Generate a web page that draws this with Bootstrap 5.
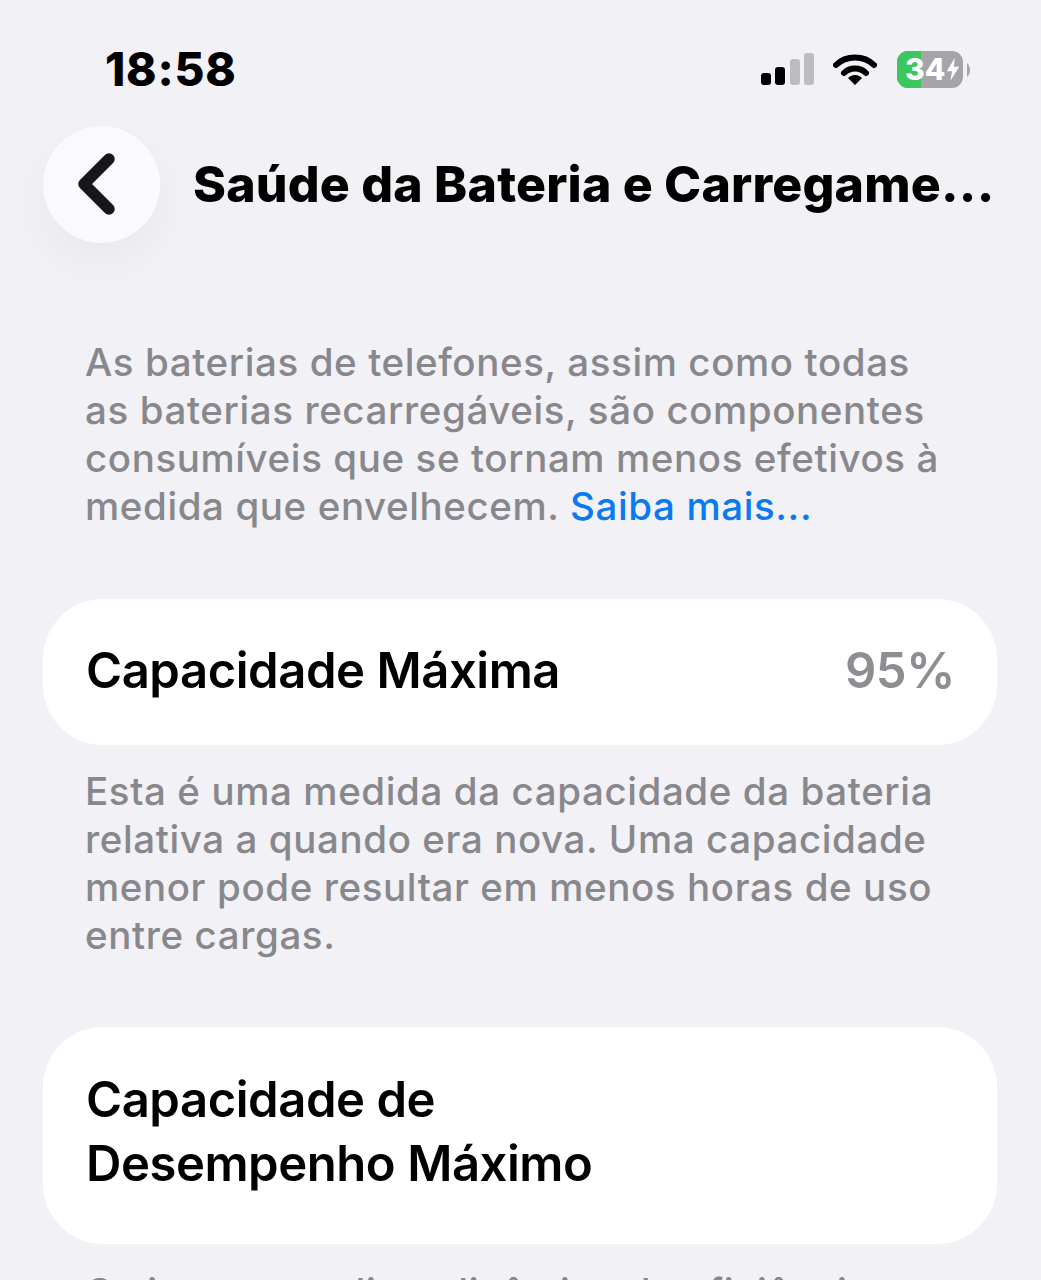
<!DOCTYPE html>
<html lang="pt">
<head>
    <meta charset="UTF-8">
    <meta name="viewport" content="width=device-width, initial-scale=1.0">
    <title>Saúde da Bateria e Carregamento</title>
    <link href="https://cdn.jsdelivr.net/npm/bootstrap@5.3.0/dist/css/bootstrap.min.css" rel="stylesheet">
    <style>
        html, body {
            height: 1280px;
            overflow: hidden;
        }
        body {
            background-color: #f1f1f6;
            color: #000;
            font-family: Inter, "Noto Sans", sans-serif;
        }
        .tela {
            padding: 0 44px 0 43px;
        }
        .barra-status {
            height: 125px;
            padding: 44px 27px 0 62px;
        }
        .hora {
            font-size: 46px;
            font-weight: 800;
            line-height: 50px;
            letter-spacing: 0.8px;
        }
        .icones-status {
            margin-top: 7px;
        }
        .icone-wifi {
            margin-left: 19px;
        }
        .cabecalho {
            height: 118px;
            gap: 33px;
        }
        .voltar {
            width: 117px;
            height: 117px;
            flex: none;
            background: #fafafd;
            box-shadow: 0 18px 50px rgba(0, 0, 0, 0.045);
        }
        .titulo {
            font-size: 50px;
            font-weight: 800;
            letter-spacing: 0.2px;
            white-space: nowrap;
            margin: 0;
            line-height: 1;
        }
        .nota {
            font-size: 38.5px;
            line-height: 48px;
            font-weight: 500;
            letter-spacing: 0.6px;
            color: #88888c;
            padding-left: 42px;
            margin: 0;
            white-space: nowrap;
        }
        .nota a {
            color: #0a7af0;
            text-decoration: none;
        }
        .primeira-nota {
            margin-top: 95px;
        }
        .cartao {
            background: #fff;
            border-radius: 60px;
            padding: 0 42px 0 43px;
            font-size: 49px;
            font-weight: 600;
            letter-spacing: -0.45px;
        }
        .cartao-capacidade {
            height: 146px;
            margin-top: 69px;
            margin-bottom: 22px;
            padding-bottom: 2px;
        }
        .cartao-desempenho {
            height: 217px;
            margin-top: 68px;
            margin-bottom: 24px;
            padding-bottom: 7px;
            line-height: 64px;
        }
        .valor {
            color: #8e8e92;
        }
        .bateria {
            position: relative;
            width: 66px;
            height: 37px;
            margin-left: 20px;
            border-radius: 11px;
            overflow: hidden;
            background: #a5a5a9;
            color: #fff;
            font-size: 30px;
            font-weight: 800;
            line-height: 37px;
        }
        .bateria-nivel {
            position: absolute;
            left: 0;
            top: 0;
            bottom: 0;
            background: #3ec65e;
        }
        .bateria-texto {
            position: relative;
            padding-left: 8px;
            gap: 1px;
        }
    </style>
</head>
<body>
    <div class="tela">
        <div class="barra-status d-flex justify-content-between align-items-start">
            <div class="hora">18:58</div>
            <div class="icones-status d-flex align-items-center">
                <svg width="53" height="33" viewBox="0 0 53 33">
                    <rect x="0" y="20" width="10" height="12" rx="3" fill="#000"/>
                    <rect x="14" y="14" width="10" height="18" rx="3" fill="#000"/>
                    <rect x="29" y="6" width="10" height="26" rx="3" fill="#bdbdc1"/>
                    <rect x="43" y="0" width="10" height="32" rx="3" fill="#bdbdc1"/>
                </svg>
                <svg class="icone-wifi" width="44" height="33" viewBox="0 0 44 33">
                    <path d="M3 12 C13 2 31 2 41 12" fill="none" stroke="#000" stroke-width="6" stroke-linecap="round"/>
                    <path d="M11 20 C17 14 27 14 33 20" fill="none" stroke="#000" stroke-width="6" stroke-linecap="round"/>
                    <path d="M15 25 C19 21 25 21 29 25 L22 32 Z" fill="#000"/>
                </svg>
                <div class="bateria">
                    <div class="bateria-nivel" style="width: 37%"></div>
                    <div class="bateria-texto d-flex align-items-center">34<svg width="14" height="23" viewBox="0 0 14 26"><path d="M9 0 L0 15 H6 L4 26 L14 10 H8 Z" fill="#fff"/></svg></div>
                </div>
                <svg class="ms-1" width="3" height="14" viewBox="0 0 3 14"><path d="M0 0 C2 2 3 4 3 7 C3 10 2 12 0 14 Z" fill="#a5a5a9"/></svg>
            </div>
        </div>

        <div class="cabecalho d-flex align-items-center">
            <div class="voltar rounded-circle d-flex align-items-center justify-content-center">
                <svg class="me-2" width="40" height="62" viewBox="0 0 40 62">
                    <path d="M31 6 L6 31 L31 56" fill="none" stroke="#17171b" stroke-width="11.5" stroke-linecap="round" stroke-linejoin="round"/>
                </svg>
            </div>
            <h1 class="titulo">Saúde da Bateria e Carregame...</h1>
        </div>

        <p class="nota primeira-nota">As baterias de telefones, assim como todas<br>as baterias recarregáveis, são componentes<br>consumíveis que se tornam menos efetivos à<br>medida que envelhecem. <a href="#">Saiba mais...</a></p>

        <div class="cartao cartao-capacidade d-flex justify-content-between align-items-center">
            <span>Capacidade Máxima</span>
            <span class="valor">95%</span>
        </div>

        <p class="nota">Esta é uma medida da capacidade da bateria<br>relativa a quando era nova. Uma capacidade<br>menor pode resultar em menos horas de uso<br>entre cargas.</p>

        <div class="cartao cartao-desempenho d-flex align-items-center">
            <span>Capacidade de<br>Desempenho Máximo</span>
        </div>

        <p class="nota">O sistema mediu a dinâmica de eficiência</p>
    </div>
</body>
</html>
